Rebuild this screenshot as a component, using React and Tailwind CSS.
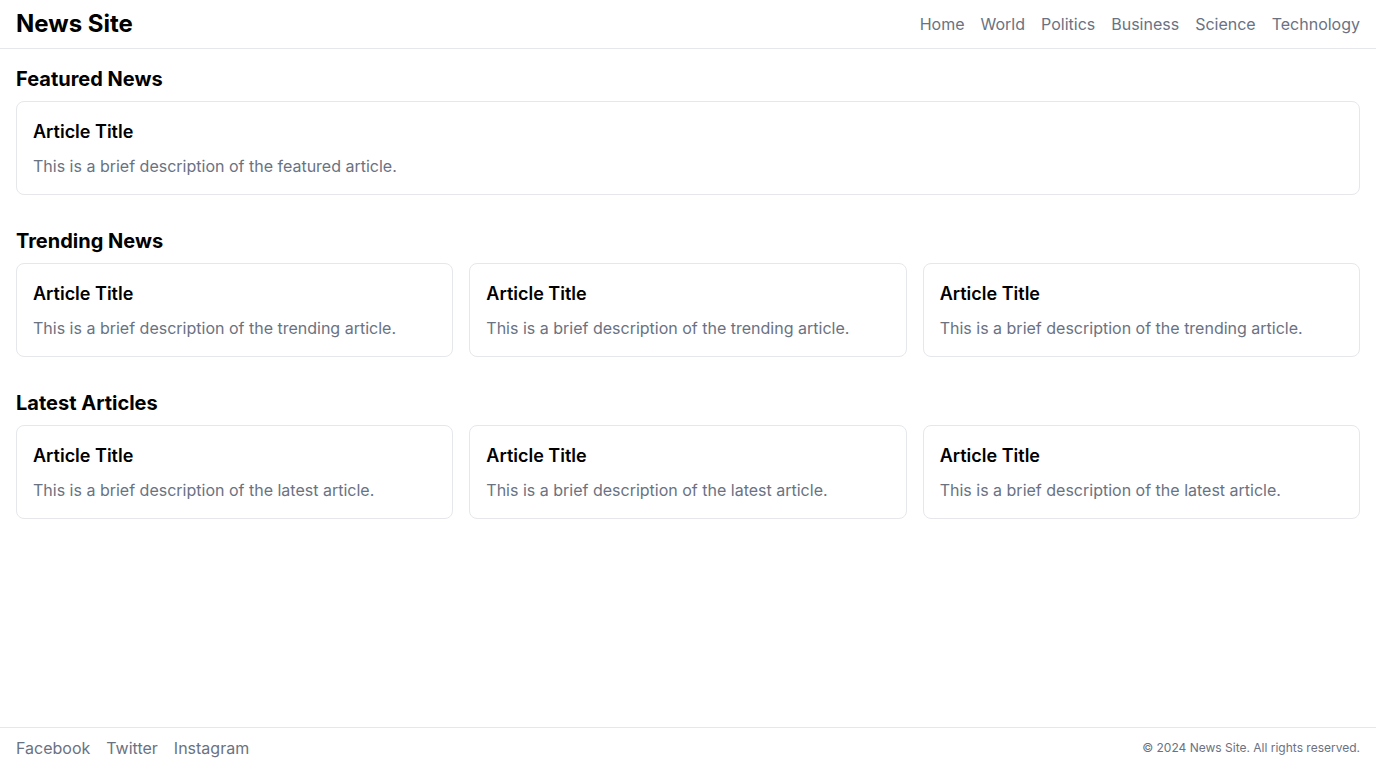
import React from "react";

function Card({ kind }) {
  return (
    <div className="border border-gray-200 rounded-lg p-4">
      <h3 className="text-lg font-semibold text-black">Article Title</h3>
      <p className="mt-2 text-base text-gray-500">This is a brief description of the {kind} article.</p>
    </div>
  );
}

export default function App() {
  const nav = ["Home", "World", "Politics", "Business", "Science", "Technology"];
  return (
    <div className="min-h-screen flex flex-col bg-white text-black" style={{ fontFamily: "Inter, 'Noto Sans', sans-serif" }}>
      <header className="flex items-center justify-between px-4 py-2 border-b border-gray-200">
        <h1 className="text-2xl font-bold">News Site</h1>
        <nav className="flex gap-4 text-base text-gray-500">
          {nav.map((n) => (
            <a key={n} href="#">{n}</a>
          ))}
        </nav>
      </header>
      <main className="flex-1 p-4 flex flex-col gap-8">
        <section>
          <h2 className="text-xl font-bold mb-2">Featured News</h2>
          <Card kind="featured" />
        </section>
        <section>
          <h2 className="text-xl font-bold mb-2">Trending News</h2>
          <div className="grid grid-cols-3 gap-4">
            <Card kind="trending" />
            <Card kind="trending" />
            <Card kind="trending" />
          </div>
        </section>
        <section>
          <h2 className="text-xl font-bold mb-2">Latest Articles</h2>
          <div className="grid grid-cols-3 gap-4">
            <Card kind="latest" />
            <Card kind="latest" />
            <Card kind="latest" />
          </div>
        </section>
      </main>
      <footer className="flex items-center justify-between px-4 py-2 border-t border-gray-200">
        <div className="flex gap-4 text-base text-gray-500">
          <a href="#">Facebook</a>
          <a href="#">Twitter</a>
          <a href="#">Instagram</a>
        </div>
        <p className="text-xs text-gray-500">© 2024 News Site. All rights reserved.</p>
      </footer>
    </div>
  );
}
